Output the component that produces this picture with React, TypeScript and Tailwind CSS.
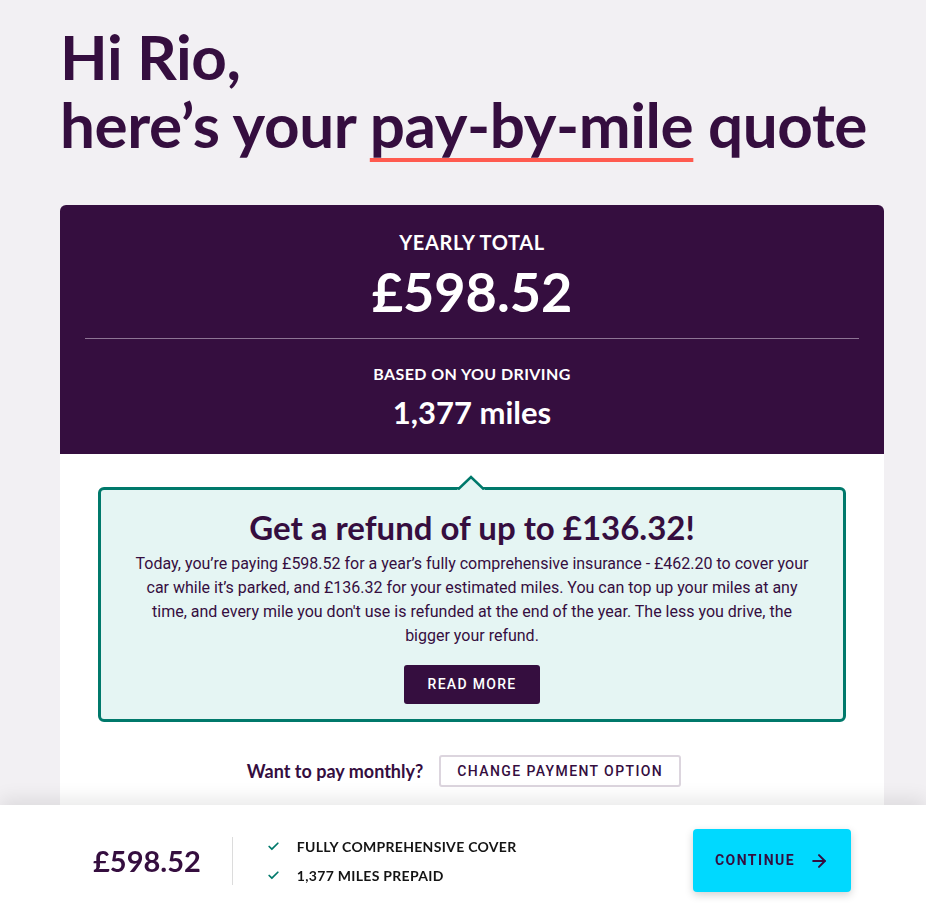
import { ArrowRight, Check } from "lucide-react";

const heading = { fontFamily: "Lato, 'Noto Sans', sans-serif" };
const body = { fontFamily: "Roboto, 'Liberation Sans', sans-serif" };

export default function App() {
  return (
    <div className="min-h-screen bg-[#f2f0f3] text-[#350e3f]" style={heading}>
      {/* Greeting */}
      <div className="w-[824px] ml-[60px] pt-[22px] pb-[47px]">
        <h1 className="text-[62px] leading-[68px] font-bold tracking-[-0.4px]">
          Hi Rio,
          <br />
          here’s your{" "}
          <span className="underline decoration-[#ff5a4f] decoration-[4px] underline-offset-[10px]">
            pay-by-mile
          </span>{" "}
          quote
        </h1>
      </div>

      {/* Quote card */}
      <div className="w-[824px] ml-[60px] rounded-md overflow-hidden bg-white">
        <div className="h-[249px] bg-[#350e3f] text-white text-center pt-[25px]">
          <p className="text-[20px] font-bold uppercase leading-6 tracking-[0.6px]">Yearly total</p>
          <p className="text-[54px] font-bold leading-[60px] mt-[8px]">£598.52</p>
          <div className="mx-[25px] mt-[16px] border-t border-[#8d7494]" />
          <p className="text-[16px] font-bold uppercase leading-5 mt-[25px] tracking-[0.4px]">Based on you driving</p>
          <p className="text-[31px] font-bold leading-9 mt-[10px]">1,377 miles</p>
        </div>

        <div className="px-[38px] pt-[33px] pb-[60px]">
          {/* Refund callout */}
          <div className="relative rounded-md border-[3px] border-[#00796b] bg-[#e5f5f3] px-6 pt-[16px] pb-[15px] text-center">
            <svg
              className="absolute -top-[15px] left-[356px]"
              width="28"
              height="15"
              viewBox="0 0 28 15"
            >
              <path d="M0 15 L14 1.5 L28 15 Z" fill="#e5f5f3" />
              <path d="M1 14.5 L14 2 L27 14.5" fill="none" stroke="#00796b" strokeWidth="2.5" />
            </svg>
            <h2 className="text-[33px] font-bold leading-[42px]">Get a refund of up to £136.32!</h2>
            <p className="text-[16px] leading-6 mt-[4px] px-[8px]" style={body}>
              Today, you’re paying £598.52 for a year’s fully comprehensive insurance - £462.20 to cover your car while it’s parked, and £136.32 for your estimated miles. You can top up your miles at any time, and every mile you don't use is refunded at the end of the year. The less you drive, the bigger your refund.
            </p>
            <button
              className="mt-[17px] h-[39px] px-6 rounded-[3px] bg-[#350e3f] text-white text-[14px] font-medium uppercase tracking-[1.3px]"
              style={body}
            >
              Read more
            </button>
          </div>

          <div className="flex items-center justify-center gap-4 mt-[33px] pr-[16px]">
            <span className="text-[18px] font-bold">Want to pay monthly?</span>
            <button
              className="h-[32px] px-4 rounded-[3px] border-2 border-[#dcd5de] bg-white text-[14px] font-medium uppercase tracking-[1.4px]"
              style={body}
            >
              Change payment option
            </button>
          </div>
        </div>
      </div>

      {/* Sticky footer */}
      <div className="fixed bottom-0 left-0 right-0 h-[100px] bg-white shadow-[0_-6px_18px_rgba(0,0,0,0.09)]">
        <div className="w-[824px] h-full ml-[60px] pl-[33px] pr-[33px] pt-[11px] flex items-center">
          <span className="text-[29px] font-bold">£598.52</span>
          <div className="ml-[31px] h-[48px] border-l border-[#dcdcdc]" />
          <ul className="ml-[34px] flex flex-col gap-[8px] text-[14px] font-bold uppercase text-[#141414] tracking-[0.3px]">
            <li className="flex items-center gap-[17px]">
              <Check size={13} strokeWidth={3.2} className="text-[#00796b]" />
              Fully comprehensive cover
            </li>
            <li className="flex items-center gap-[17px]">
              <Check size={13} strokeWidth={3.2} className="text-[#00796b]" />
              1,377 miles prepaid
            </li>
          </ul>
          <button
            className="ml-auto h-[63px] w-[158px] rounded-[4px] bg-[#00d9ff] shadow-[0_3px_8px_rgba(0,0,0,0.18)] flex items-center justify-center gap-[14px] text-[14px] font-bold uppercase tracking-[1.5px]"
            style={body}
          >
            Continue
            <ArrowRight size={20} strokeWidth={2.4} />
          </button>
        </div>
      </div>
    </div>
  );
}
